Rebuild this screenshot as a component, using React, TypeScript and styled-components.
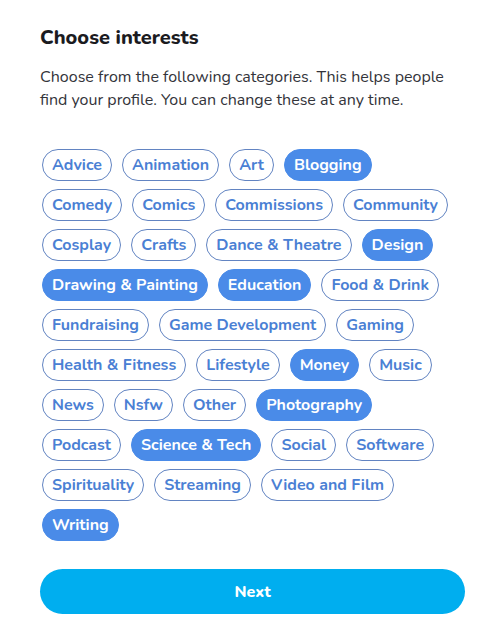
import React, { useState } from "react";
import styled, { createGlobalStyle } from "styled-components";

const Global = createGlobalStyle`
  html, body { margin: 0; padding: 0; background: #ffffff; }
  body { font-family: "Nunito", "Open Sans", "Noto Sans", sans-serif; }
  * { box-sizing: border-box; }
`;

const Page = styled.div`
  width: 499px;
  min-height: 630px;
  padding: 24px 34px 0 40px;
  background: #fff;
`;

const Title = styled.h1`
  margin: 0;
  font-size: 20px;
  line-height: 28px;
  font-weight: 800;
  color: #1b1b1f;
`;

const Lead = styled.p`
  margin: 14px 0 0;
  font-size: 16px;
  line-height: 23px;
  color: #33343a;
`;

const Chips = styled.div`
  display: flex;
  flex-wrap: wrap;
  gap: 8px 10px;
  width: 412px;
  margin: 37px 0 0 2px;
`;

const Chip = styled.button<{ $on: boolean }>`
  height: 32px;
  padding: 0 9px;
  border-radius: 16px;
  border: 1px solid ${(p) => (p.$on ? "#4a8be8" : "#6284c2")};
  background: ${(p) => (p.$on ? "#4a8be8" : "#fff")};
  color: ${(p) => (p.$on ? "#fff" : "#4a80d4")};
  font-family: inherit;
  font-size: 16px;
  font-weight: 700;
  cursor: pointer;
  white-space: nowrap;
`;

const Next = styled.button`
  display: block;
  width: 425px;
  height: 45px;
  margin-top: 28px;
  border: none;
  border-radius: 23px;
  background: #00aeef;
  color: #fff;
  font-family: inherit;
  font-size: 16px;
  font-weight: 800;
  cursor: pointer;
`;

const ALL = [
  "Advice", "Animation", "Art", "Blogging", "Comedy", "Comics", "Commissions", "Community",
  "Cosplay", "Crafts", "Dance & Theatre", "Design", "Drawing & Painting", "Education",
  "Food & Drink", "Fundraising", "Game Development", "Gaming", "Health & Fitness", "Lifestyle",
  "Money", "Music", "News", "Nsfw", "Other", "Photography", "Podcast", "Science & Tech",
  "Social", "Software", "Spirituality", "Streaming", "Video and Film", "Writing",
];

const INITIAL = ["Blogging", "Design", "Drawing & Painting", "Education", "Money", "Photography", "Science & Tech", "Writing"];

export default function App() {
  const [sel, setSel] = useState<string[]>(INITIAL);
  const toggle = (c: string) =>
    setSel((s) => (s.includes(c) ? s.filter((x) => x !== c) : [...s, c]));
  return (
    <>
      <Global />
      <Page>
        <Title>Choose interests</Title>
        <Lead>
          Choose from the following categories. This helps people find your profile. You can change
          these at any time.
        </Lead>
        <Chips>
          {ALL.map((c) => (
            <Chip key={c} $on={sel.includes(c)} onClick={() => toggle(c)}>
              {c}
            </Chip>
          ))}
        </Chips>
        <Next>Next</Next>
      </Page>
    </>
  );
}
